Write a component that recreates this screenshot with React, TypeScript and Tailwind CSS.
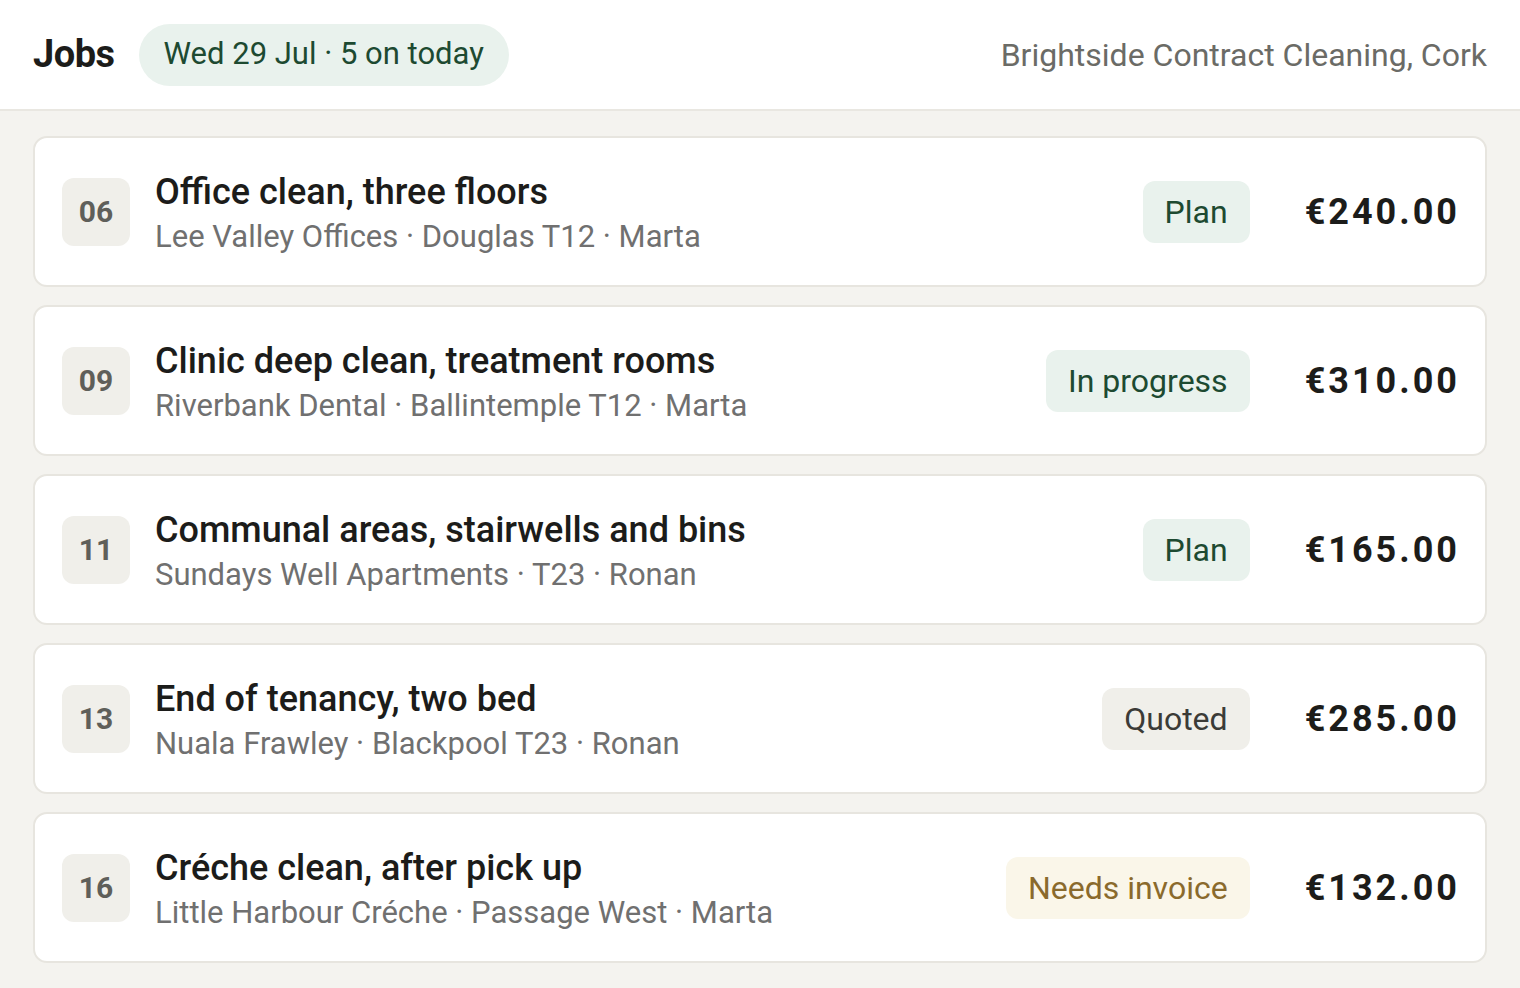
const jobs = [
  { no: "06", title: "Office clean, three floors", meta: "Lee Valley Offices · Douglas T12 · Marta", status: "Plan", price: "€240.00" },
  { no: "09", title: "Clinic deep clean, treatment rooms", meta: "Riverbank Dental · Ballintemple T12 · Marta", status: "In progress", price: "€310.00" },
  { no: "11", title: "Communal areas, stairwells and bins", meta: "Sundays Well Apartments · T23 · Ronan", status: "Plan", price: "€165.00" },
  { no: "13", title: "End of tenancy, two bed", meta: "Nuala Frawley · Blackpool T23 · Ronan", status: "Quoted", price: "€285.00" },
  { no: "16", title: "Créche clean, after pick up", meta: "Little Harbour Créche · Passage West · Marta", status: "Needs invoice", price: "€132.00" },
];

function StatusBadge({ status }: { status: string }) {
  let tone = "bg-[#e9f2ed] text-[#1d4a31]";
  if (status === "Quoted") tone = "bg-[#f0efea] text-[#3b3b37]";
  if (status === "Needs invoice") tone = "bg-[#faf6e9] text-[#8a6a2c]";
  return (
    <span className={`h-[62px] px-[22px] flex items-center rounded-[12px] text-[32px] ${tone}`}>
      {status}
    </span>
  );
}

export default function App() {
  return (
    <div
      className="min-h-screen bg-[#f4f3ef] text-[#1c1c1a]"
      style={{ fontFamily: "Roboto, 'Noto Sans', sans-serif" }}
    >
      {/* Header */}
      <header className="h-[111px] bg-white border-b-2 border-[#e9e7e1] flex items-center px-[33px]">
        <h1 className="text-[38px] font-bold tracking-[-0.5px]">Jobs</h1>
        <span className="ml-[24px] h-[62px] px-[25px] flex items-center rounded-full bg-[#e9f2ed] text-[#1d4a31] text-[31px]">
          Wed 29 Jul · 5 on today
        </span>
        <span className="ml-auto text-[32px] text-[#6b6b66]">Brightside Contract Cleaning, Cork</span>
      </header>

      {/* Job list */}
      <main className="px-[33px] pt-[25px] pb-[24px] flex flex-col gap-[18px]">
        {jobs.map((job) => (
          <div
            key={job.no}
            className="h-[151px] bg-white border-2 border-[#e7e5df] rounded-[14px] flex items-center pl-[27px] pr-[25px]"
          >
            <div className="w-[68px] h-[68px] rounded-[12px] bg-[#f0efea] flex items-center justify-center text-[30px] font-bold text-[#5f5f5a]">
              {job.no}
            </div>
            <div className="ml-[25px] pt-[4px] flex flex-col">
              <div className="text-[36px] font-medium leading-[46px] text-[#1c1c1a]">{job.title}</div>
              <div className="text-[31px] leading-[44px] text-[#707070]">{job.meta}</div>
            </div>
            <div className="ml-auto flex items-center">
              <StatusBadge status={job.status} />
              <div className="ml-[55px] text-[36px] font-bold tracking-[3px] text-[#1c1c1a]">{job.price}</div>
            </div>
          </div>
        ))}
      </main>
    </div>
  );
}
